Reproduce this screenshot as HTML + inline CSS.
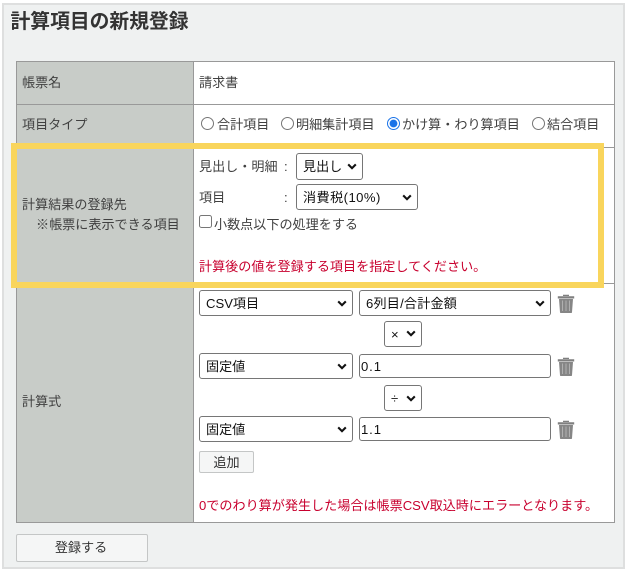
<!DOCTYPE html>
<html lang="ja"><head><meta charset="utf-8"><title>計算項目の新規登録</title>
<style>
html,body{margin:0;padding:0;background:#fff}
body{position:relative;width:628px;height:572px;overflow:hidden;font-family:"Liberation Sans","Noto Sans CJK JP",sans-serif;font-size:13.1px;color:#404040}
.a{position:absolute;box-sizing:border-box}
.t{position:absolute;white-space:nowrap;line-height:20px;height:20px}
.r{color:#c8002e}
select,input[type=text]{position:absolute;box-sizing:border-box;margin:0;font-family:"Liberation Sans","Noto Sans CJK JP",sans-serif;font-size:13.1px;color:#111;background-color:#fff;border:1px solid #767676;border-radius:3px;outline:0}
select{padding:0 0 0 6px;-webkit-appearance:none;appearance:none}
input[type=text]{padding:0 1px;letter-spacing:.9px}
input[type=radio],input[type=checkbox]{position:absolute;margin:0;width:13px;height:13px}
button{position:absolute;box-sizing:border-box;margin:0;font-family:"Liberation Sans","Noto Sans CJK JP",sans-serif;font-size:13.1px;color:#333;background:#f5f6f6;border:1px solid #c4c6c6;border-radius:2px}
svg{position:absolute}
svg.c{width:10px;height:7px;pointer-events:none}
</style></head><body>
<div class="a" style="left:2px;top:3px;width:623px;height:566px;background:#eff1f1;border:2px solid #dedfdf"></div>
<div class="t" style="left:10.5px;top:11px;font-size:19.8px;font-weight:700;color:#333;line-height:22px;height:22px">計算項目の新規登録</div>

<div class="a" style="left:16px;top:61px;width:599px;height:462px;background:#fff;border:1px solid #999"></div>
<div class="a" style="left:17px;top:62px;width:176px;height:460px;background:#c8ccc8"></div>
<div class="a" style="left:193px;top:62px;width:1px;height:460px;background:#999"></div>
<div class="a" style="left:17px;top:104px;width:597px;height:1px;background:#999"></div>
<div class="a" style="left:17px;top:147px;width:597px;height:1px;background:#999"></div>
<div class="a" style="left:17px;top:283px;width:597px;height:1px;background:#999"></div>

<div class="t" style="left:22px;top:73px">帳票名</div>
<div class="t" style="left:199px;top:73px">請求書</div>
<div class="t" style="left:22px;top:115px">項目タイプ</div>

<input type="radio" name="k" style="left:201px;top:117px"><div class="t" style="left:217px;top:115px">合計項目</div>
<input type="radio" name="k" style="left:281px;top:117px"><div class="t" style="left:296px;top:115px">明細集計項目</div>
<input type="radio" name="k" checked style="left:387px;top:117px;accent-color:#1a73e8"><div class="t" style="left:402px;top:115px">かけ算・わり算項目</div>
<input type="radio" name="k" style="left:532px;top:117px"><div class="t" style="left:547px;top:115px">結合項目</div>

<div class="t" style="left:22px;top:195px">計算結果の登録先</div>
<div class="t" style="left:36px;top:215px">※帳票に表示できる項目</div>

<div class="t" style="left:199px;top:157px">見出し・明細</div><div class="t" style="left:284px;top:157px">:</div>
<select style="left:296px;top:153px;width:67px;height:27px"><option>見出し</option></select>
<div class="t" style="left:199px;top:188px">項目</div><div class="t" style="left:284px;top:188px">:</div>
<select style="left:296px;top:184px;width:122px;height:26px;letter-spacing:.45px"><option>消費税(10%)</option></select>
<input type="checkbox" style="left:199px;top:215px"><div class="t" style="left:214px;top:215px">小数点以下の処理をする</div>
<div class="t r" style="left:199px;top:257px">計算後の値を登録する項目を指定してください。</div>

<div class="a" style="left:11px;top:143px;width:593px;height:145px;border:6px solid #f9d55c"></div>

<select style="left:199px;top:290px;width:154px;height:26px"><option>CSV項目</option></select>
<select style="left:359px;top:290px;width:192px;height:26px;letter-spacing:.2px"><option>6列目/合計金額</option></select>
<select style="left:384px;top:321px;width:38px;height:26px"><option>×</option></select>
<select style="left:199px;top:353px;width:154px;height:26px"><option>固定値</option></select>
<input type="text" value="0.1" style="left:359px;top:354px;width:192px;height:24px">
<select style="left:384px;top:385px;width:38px;height:26px"><option>÷</option></select>
<select style="left:199px;top:416px;width:154px;height:26px"><option>固定値</option></select>
<input type="text" value="1.1" style="left:359px;top:417px;width:192px;height:24px">

<svg class="c" style="left:347px;top:163px" viewBox="0 0 10 7"><path d="M1.2 1.4L5 5.2 8.8 1.4" fill="none" stroke="#111" stroke-width="2.1"/></svg>
<svg class="c" style="left:402px;top:194px" viewBox="0 0 10 7"><path d="M1.2 1.4L5 5.2 8.8 1.4" fill="none" stroke="#111" stroke-width="2.1"/></svg>
<svg class="c" style="left:337px;top:300px" viewBox="0 0 10 7"><path d="M1.2 1.4L5 5.2 8.8 1.4" fill="none" stroke="#111" stroke-width="2.1"/></svg>
<svg class="c" style="left:535px;top:300px" viewBox="0 0 10 7"><path d="M1.2 1.4L5 5.2 8.8 1.4" fill="none" stroke="#111" stroke-width="2.1"/></svg>
<svg class="c" style="left:406px;top:330px" viewBox="0 0 10 7"><path d="M1.2 1.4L5 5.2 8.8 1.4" fill="none" stroke="#111" stroke-width="2.1"/></svg>
<svg class="c" style="left:337px;top:363px" viewBox="0 0 10 7"><path d="M1.2 1.4L5 5.2 8.8 1.4" fill="none" stroke="#111" stroke-width="2.1"/></svg>
<svg class="c" style="left:406px;top:395px" viewBox="0 0 10 7"><path d="M1.2 1.4L5 5.2 8.8 1.4" fill="none" stroke="#111" stroke-width="2.1"/></svg>
<svg class="c" style="left:337px;top:426px" viewBox="0 0 10 7"><path d="M1.2 1.4L5 5.2 8.8 1.4" fill="none" stroke="#111" stroke-width="2.1"/></svg>

<svg style="left:557px;top:294px" width="18" height="19" viewBox="0 0 18 19"><path d="M6 2V.8h6V2M.8 2.2h16.4V4.5H.8z" fill="#7f7f7f"/><path d="M2 5h14l-1 13.2a.8.8 0 0 1-.8.8H3.8a.8.8 0 0 1-.8-.8z" fill="#868686"/><path d="M5.5 6.5v10.5M9 6.5v10.5M12.5 6.5v10.5" stroke="#b0b0b0" stroke-width="1"/></svg>
<svg style="left:557px;top:357px" width="18" height="19" viewBox="0 0 18 19"><path d="M6 2V.8h6V2M.8 2.2h16.4V4.5H.8z" fill="#7f7f7f"/><path d="M2 5h14l-1 13.2a.8.8 0 0 1-.8.8H3.8a.8.8 0 0 1-.8-.8z" fill="#868686"/><path d="M5.5 6.5v10.5M9 6.5v10.5M12.5 6.5v10.5" stroke="#b0b0b0" stroke-width="1"/></svg>
<svg style="left:557px;top:420px" width="18" height="19" viewBox="0 0 18 19"><path d="M6 2V.8h6V2M.8 2.2h16.4V4.5H.8z" fill="#7f7f7f"/><path d="M2 5h14l-1 13.2a.8.8 0 0 1-.8.8H3.8a.8.8 0 0 1-.8-.8z" fill="#868686"/><path d="M5.5 6.5v10.5M9 6.5v10.5M12.5 6.5v10.5" stroke="#b0b0b0" stroke-width="1"/></svg>

<button style="left:199px;top:451px;width:55px;height:22px;padding:0 0 2px">追加</button>
<div class="t" style="left:22px;top:392px">計算式</div>
<div class="t r" style="left:199px;top:496px">0でのわり算が発生した場合は帳票CSV取込時にエラーとなります。</div>
<button style="left:16px;top:534px;width:132px;height:28px;padding:0 2px 3px 0">登録する</button>
</body></html>
